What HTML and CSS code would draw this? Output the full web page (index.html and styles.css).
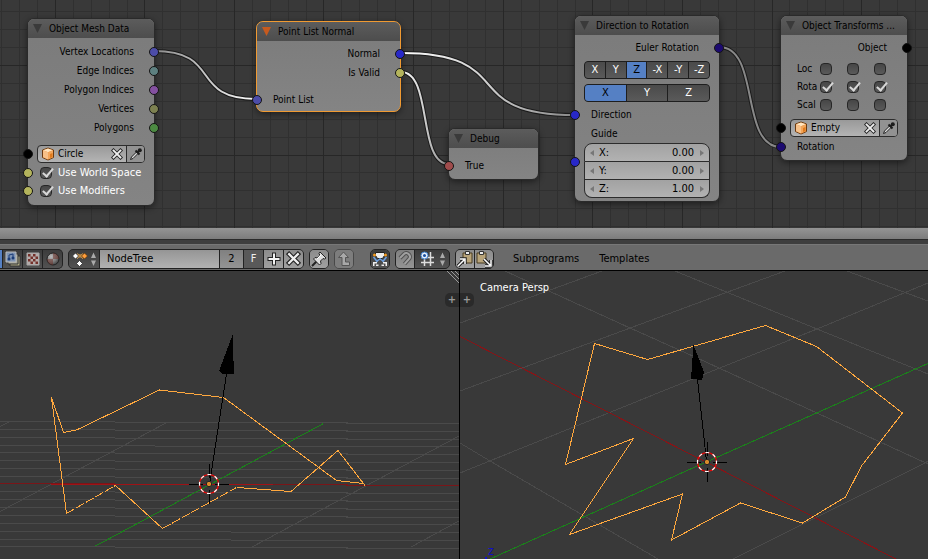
FILE: index.html
```html
<!DOCTYPE html>
<html lang="en">
<head>
<meta charset="utf-8">
<title>NodeTree</title>
<link rel="stylesheet" href="styles.css">
</head>
<body>
<svg class="defs" aria-hidden="true">
  <defs>
    <linearGradient id="w1" x1="0" x2="1"><stop offset="0" stop-color="#8c8c8c"/><stop offset=".5" stop-color="#c4c4c4"/><stop offset="1" stop-color="#fff"/></linearGradient>
    <linearGradient id="w2" x1="0" x2="1"><stop offset="0" stop-color="#fff"/><stop offset=".5" stop-color="#ccc"/><stop offset="1" stop-color="#888"/></linearGradient>
    <radialGradient id="ball" cx=".35" cy=".3" r=".8"><stop offset="0" stop-color="#bbb"/><stop offset=".6" stop-color="#777"/><stop offset="1" stop-color="#333"/></radialGradient>
    <symbol id="cube" viewBox="0 0 14 14">
      <path d="M7 1l5.5 2v7.500L7 13 1.500 10.500V3z" fill="#e8862a" stroke="#6b3a10"/>
      <path d="M7 1.500L12 3.300 7 5.300 2 3.300z" fill="#ffe6c2"/>
      <path d="M7 5.300l5-2v7L7 12.500z" fill="#f2a55a"/>
      <path d="M2 3.300l5 2v7.200l-5-2.200z" fill="#f7c088"/>
      <path d="M9 7l2.500-1v4L9 11z" fill="#e07a1c"/>
    </symbol>
    <symbol id="cross" viewBox="0 0 12 12">
      <path d="M2.500 2.500l7 7M9.500 2.500l-7 7" stroke="#222" stroke-width="3.600" stroke-linecap="square"/>
      <path d="M2.500 2.500l7 7M9.500 2.500l-7 7" stroke="#eee" stroke-width="1.800" stroke-linecap="square"/>
    </symbol>
    <symbol id="dropper" viewBox="0 0 14 14">
      <path d="M1.500 12.500l1-2.500 5-5 1.500 1.500-5 5z" fill="#ddd" stroke="#222"/>
      <path d="M6.500 3.500l4 4M8.500 5.500l2.500-2.500" stroke="#1c1c1c" stroke-width="2"/>
      <circle cx="10.800" cy="3.200" r="2" fill="#1c1c1c"/>
    </symbol>
    <symbol id="fold" viewBox="0 0 9 9"><path d="M0 0h9L4.500 9z" fill="currentColor"/></symbol>
    <symbol id="cursor" viewBox="-20 -20 40 40">
      <g fill="none" shape-rendering="crispEdges">
        <path d="M-20 0h14M6 0h14M0-20v14M0 6v14" stroke="#000"/>
      </g>
      <circle r="9.500" fill="none" stroke="#f00" stroke-width="1.200"/>
      <circle r="9.500" fill="none" stroke="#fff" stroke-width="1.200" stroke-dasharray="3.730" stroke-dashoffset="1.800"/>
      <circle r="2.700" fill="#d98b2b" stroke="#222"/>
    </symbol>
    <symbol id="clip" viewBox="0 0 18 18">
      <path d="M7 3h9v10H7z" fill="#b8a47a" stroke="#4a3c20"/>
      <path d="M9.500 1.500h4v3h-4z" fill="#eee" stroke="#333"/>
    </symbol>
  </defs>
</svg>

<main class="editor">
  <section class="canvas" aria-label="Node editor">
    <svg class="layer" width="928" height="228" aria-hidden="true">
      <g fill="none" shape-rendering="crispEdges">
        <path stroke="#303030" d="M1.500 0v228M19.500 0v228M37.500 0v228M73.500 0v228M91.500 0v228M109.500 0v228M127.500 0v228M162.500 0v228M180.500 0v228M198.500 0v228M216.500 0v228M252.500 0v228M270.500 0v228M288.500 0v228M306.500 0v228M341.500 0v228M359.500 0v228M377.500 0v228M395.500 0v228M431.500 0v228M449.500 0v228M467.500 0v228M485.500 0v228M521.500 0v228M539.500 0v228M557.500 0v228M575.500 0v228M610.500 0v228M628.500 0v228M646.500 0v228M664.500 0v228M700.500 0v228M718.500 0v228M736.500 0v228M754.500 0v228M789.500 0v228M807.500 0v228M825.500 0v228M843.500 0v228M879.500 0v228M897.500 0v228M915.500 0v228M0 11.500h928M0 29.500h928M0 47.500h928M0 83.500h928M0 101.500h928M0 119.500h928M0 137.500h928M0 172.500h928M0 190.500h928M0 208.500h928M0 226.500h928"/>
        <path stroke="#272727" d="M55.500 0v228M144.500 0v228M234.500 0v228M323.500 0v228M413.500 0v228M503.500 0v228M592.500 0v228M682.500 0v228M772.500 0v228M861.500 0v228M0 65.500h928M0 155.500h928"/>
      </g>
      <g fill="none">
        <g stroke="#1a1a1a" stroke-width="4">
          <path d="M154 51C223 51 188 99 257 99"/><path d="M401 53C520 53 456 115 575 115"/><path d="M401 72C433 72 417 164 449 164"/><path d="M719 47C761 47 739 147 781 147"/>
        </g>
        <g stroke-width="2">
          <path stroke="url(#w1)" d="M154 51C223 51 188 99 257 99"/><path stroke="url(#w2)" d="M401 53C520 53 456 115 575 115"/><path stroke="url(#w2)" d="M401 72C433 72 417 164 449 164"/><path stroke="#888" d="M719 47C761 47 739 147 781 147"/>
        </g>
      </g>
    </svg>

    <article class="node mesh">
      <h2><svg><use href="#fold"/></svg>Object Mesh Data</h2>
      <ul>
        <li class="out">Vertex Locations<i class="sock r vec2"></i></li>
        <li class="out">Edge Indices<i class="sock r teal"></i></li>
        <li class="out">Polygon Indices<i class="sock r violet"></i></li>
        <li class="out">Vertices<i class="sock r olive"></i></li>
        <li class="out">Polygons<i class="sock r green"></i></li>
      </ul>
      <div class="pick"><i class="sock l black"></i>
        <div class="field"><svg class="ic"><use href="#cube"/></svg><input type="text" aria-label="Object" value="Circle"><button class="clear" aria-label="Clear"><svg><use href="#cross"/></svg></button><button class="eye" aria-label="Pick object"><svg><use href="#dropper"/></svg></button></div>
      </div>
      <label class="opt"><i class="sock l yellow"></i><input type="checkbox" checked>Use World Space</label>
      <label class="opt"><i class="sock l yellow"></i><input type="checkbox" checked>Use Modifiers</label>
    </article>

    <article class="node normal active">
      <h2><svg><use href="#fold"/></svg>Point List Normal</h2>
      <ul>
        <li class="out">Normal<i class="sock r vec"></i></li>
        <li class="out">Is Valid<i class="sock r yellow"></i></li>
        <li class="in gap">Point List<i class="sock l vec2"></i></li>
      </ul>
    </article>

    <article class="node debug">
      <h2><svg><use href="#fold"/></svg>Debug</h2>
      <ul><li class="in">True<i class="sock l red"></i></li></ul>
    </article>

    <article class="node rot">
      <h2><svg><use href="#fold"/></svg>Direction to Rotation</h2>
      <ul><li class="out">Euler Rotation<i class="sock r navy"></i></li></ul>
      <div class="seg"><button>X</button><button>Y</button><button class="on">Z</button><button>-X</button><button>-Y</button><button>-Z</button></div>
      <div class="seg"><button class="on">X</button><button>Y</button><button>Z</button></div>
      <ul>
        <li class="in">Direction<i class="sock l vec"></i></li>
        <li class="in">Guide</li>
      </ul>
      <div class="nums"><i class="sock l vec"></i>
        <label>X:<input type="text" value="0.00"></label>
        <label>Y:<input type="text" value="0.00"></label>
        <label>Z:<input type="text" value="1.00"></label>
      </div>
    </article>

    <article class="node trans">
      <h2><svg><use href="#fold"/></svg>Object Transforms ...</h2>
      <ul><li class="out">Object<i class="sock r black"></i></li></ul>
      <div class="matrix">
        <span>Loc</span><input type="checkbox" aria-label="Location X"><input type="checkbox" aria-label="Location Y"><input type="checkbox" aria-label="Location Z">
        <span>Rota</span><input type="checkbox" checked aria-label="Rotation X"><input type="checkbox" checked aria-label="Rotation Y"><input type="checkbox" checked aria-label="Rotation Z">
        <span>Scal</span><input type="checkbox" aria-label="Scale X"><input type="checkbox" aria-label="Scale Y"><input type="checkbox" aria-label="Scale Z">
      </div>
      <div class="pick"><i class="sock l black"></i>
        <div class="field"><svg class="ic"><use href="#cube"/></svg><input type="text" aria-label="Object" value="Empty"><button class="clear" aria-label="Clear"><svg><use href="#cross"/></svg></button><button class="eye" aria-label="Pick object"><svg><use href="#dropper"/></svg></button></div>
      </div>
      <ul><li class="in">Rotation<i class="sock l navy"></i></li></ul>
    </article>
  </section>

  <div class="scroll"></div>
  <div class="edge"></div>

  <header class="bar">
    <div class="group types">
      <button class="blue" aria-label="Shader nodes"></button>
      <button class="dark" aria-label="Compositing nodes"><svg viewBox="0 0 18 18"><path d="M6 6h10v10H6z" fill="#b0ac88" stroke="#333"/><path d="M4 4h10v10H4z" fill="#a8a898" stroke="#333"/><path d="M2 2h10v10H2z" fill="#7f94b4" stroke="#bbb"/><path d="M5 9V5l4-1v4" fill="none" stroke="#1c3d78"/><circle cx="5" cy="9" r="1.500" fill="#1c3d78"/><circle cx="9" cy="8" r="1.500" fill="#1c3d78"/></svg></button>
      <button class="dark" aria-label="Texture nodes"><svg viewBox="0 0 18 18"><path d="M3 3h12v12H3z" fill="#b5acaa" stroke="#a8a8a8"/><path d="M4 4h2.500v2.500H4zM9 4h2.500v2.500H9zM6.500 6.500H9V9H6.500zM11.500 6.500H14V9h-2.500zM4 9h2.500v2.500H4zM9 9h2.500v2.500H9zM6.500 11.500H9V14H6.500zM11.500 11.500H14V14h-2.500z" fill="#74302a"/></svg></button>
      <button class="dark" aria-label="Material nodes"><svg viewBox="0 0 18 18"><circle cx="9" cy="9" r="6" fill="url(#ball)" stroke="#222"/><path d="M9 3a6 6 0 0 1 6 6H9zM9 9v6a6 6 0 0 1-6-6z" fill="#6e3028" opacity=".5"/></svg></button>
    </div>
    <div class="group tree">
      <button class="dark menu" aria-label="Browse node trees"><svg class="w30" viewBox="0 0 30 18"><path d="M6 6h9" stroke="#b98a4a" stroke-width="3"/><path d="M8 9l3-3 3 3M8 3.500l3 2 3-2" fill="none" stroke="#b98a4a"/><path d="M6.500 3l3 3-3 3-3-3zM10.500 10.500l3 3-3 3-3-3z" fill="#fff" stroke="#222" stroke-width=".7"/><path d="M15.500 3l3 3-3 3-3-3z" fill="#ff9d3c" stroke="#5a3000" stroke-width=".7"/><path d="M22 8l2.500-5.500L27 8zM22 10.500h5L24.500 16z" fill="#aaa"/></svg></button>
      <input type="text" aria-label="Node tree name" value="NodeTree">
      <button class="mid count">2</button>
      <button class="fake">F</button>
      <button class="light" aria-label="Add"><svg viewBox="0 0 18 18"><path d="M9 4.500v9M4.500 9h9" stroke="#222" stroke-width="4" stroke-linecap="square"/><path d="M9 4.500v9M4.500 9h9" stroke="#f2f2f2" stroke-width="2" stroke-linecap="square"/></svg></button>
      <button class="light unlink" aria-label="Unlink"><svg><use href="#cross"/></svg></button>
    </div>
    <div class="group"><button class="light" aria-label="Pin"><svg viewBox="0 0 18 18"><path d="M2 16l5-5" stroke="#222" stroke-width="2"/><path d="M10 2l6 6-1.500 1-1.500-.5-2.500 2.500.5 2.500-1.500 1.500-6-6 1.500-1.500 2.500.5L10 5.500 9 3.500z" fill="#ddd" stroke="#222"/><path d="M7 9l4-4" stroke="#fff"/></svg></button></div>
    <div class="group off"><button class="light" aria-label="Parent tree"><svg viewBox="0 0 18 18"><path d="M8.500 2l5 5.500h-3V12h4v3.500H7V7.500H3.500z" fill="#a8a8a8" stroke="#555"/></svg></button></div>
    <div class="group wide"><button class="dark" aria-label="Show in 3D view"><svg viewBox="0 0 18 18"><path d="M4.500 2.500h9v3l-2 3h-5l-2-3z" fill="#eee" stroke="#222"/><circle cx="3.500" cy="5" r="1.500" fill="#f39a1e"/><circle cx="14.500" cy="5" r="1.500" fill="#f39a1e"/><path d="M2.500 7l4 5M15.500 7l-4 5M6 11l3-2 3 2" fill="none" stroke="#6da0e0" stroke-width="1.500"/><path d="M2 12h4v1.500H3.500V16H2zM16 12h-4v1.500h2.500V16H16zM5 14.500h2.500V16H5zM10.500 14.500H13V16h-2.500z" fill="#eee"/></svg></button></div>
    <div class="group">
      <button class="mid" aria-label="Snap"><svg viewBox="0 0 18 18"><path d="M4 8l4-4c3-3 8 2 5 5l-4.500 5" fill="none" stroke="#505050" stroke-width="4"/><path d="M4 8l4-4c3-3 8 2 5 5l-4.500 5" fill="none" stroke="#a0a0a0" stroke-width="2"/></svg></button>
      <button class="dark snap" aria-label="Snap element"><svg class="w34" viewBox="0 0 34 18"><path d="M9.500 3v13M15.500 2v14M6 7.500h13M6 12.500h13" stroke="#ddd" stroke-width="1.500"/><circle cx="9.500" cy="5.500" r="3.500" fill="#e8f0fa" stroke="#3e7fd0"/><circle cx="9.500" cy="5.500" r="1.500" fill="#1b4fa0"/><path d="M25 8l2.500-5.500L30 8zM25 10.500h5L27.500 16z" fill="#aaa"/></svg></button>
    </div>
    <div class="group">
      <button class="light" aria-label="Copy nodes"><svg viewBox="0 0 18 18"><use href="#clip"/><path d="M2 16l6-6M4 9h5v5" fill="none" stroke="#222" stroke-width="3.500"/><path d="M2 16l6-6M4 9h5v5" fill="none" stroke="#fff" stroke-width="1.500"/></svg></button>
      <button class="light" aria-label="Paste nodes"><svg viewBox="0 0 18 18"><use href="#clip" x="-5"/><path d="M9 9l6 6M16 10v6h-6" fill="none" stroke="#222" stroke-width="3.500"/><path d="M9 9l6 6M16 10v6h-6" fill="none" stroke="#fff" stroke-width="1.500"/></svg></button>
    </div>
    <nav><a href="#subprograms">Subprograms</a><a href="#templates">Templates</a></nav>
  </header>

  <section class="views">
    <div class="view" aria-label="User view">
      <svg class="scene" viewBox="0 271 459 288" preserveAspectRatio="xMinYMin slice" aria-hidden="true">
        <g fill="none" shape-rendering="crispEdges">
          <path stroke="#4a4a4a" d="M0 421.500l459 2M0 429.500l459 2M0 437.500l459 2M0 445.500l459 1.500M0 452.500l459 2M0 460.500l459 2M0 468.500l459 2M0 476.500l459 2M0 491.500l459 2M0 499.500l459 2M0 507.500l459 2M0 515.500l459 2M0 523.500l459 1.500M0 531l459 2M0 539l459 2M0 546.500l459 2M0 426.500l9-4.500M0 511.500l166-88.500M252 547l207-111M411 547l48-26"/>
          <path stroke="#7a1518" d="M0 483.500L459 485.500"/>
          <path stroke="#a01216" d="M51 484.500h222"/>
          <path stroke="#1a821a" d="M95.500 546L323.500 423.500"/>
          <path stroke="#ffa83e" d="M66.500 513.500L51.500 397.500l12 35 13-2.500 83-40 64 7.500 113 83 27 3 1.500 2-27-35-47 41-54-4M115.500 485.500l47 43"/>
          <path stroke="#ffa83e" stroke-dasharray="9 2" d="M66.500 513.500l49-28M162.500 528.500l74-41"/>
          <path stroke="#000" d="M209.500 484L226.500 374"/>
          <path fill="#000" d="M232.500 335L234 374h-12l-3-3z"/>
        </g>
        <use href="#cursor" x="189" y="464" width="40" height="40"/>
        <path d="M447 271l12 12M451 271l8 8M455 271l4 4" stroke="#999" shape-rendering="crispEdges"/>
      </svg>
      <button class="tab right" aria-label="Open properties">+</button>
    </div>
    <div class="view" aria-label="Camera view">
      <svg class="scene" viewBox="460 271 468 288" preserveAspectRatio="xMinYMin slice" aria-hidden="true">
        <g fill="none" shape-rendering="crispEdges">
          <path stroke="#4a4a4a" d="M460 323L602 271M460 391L695 304 785 271M460 473L695 378 817 329 928 283M733 559L925 463l3-2M505 271L630 328 695 357 928 464M675 271L817 329 928 374M847 271L928 301M460 443L490 461 658 559"/>
          <path stroke="#861417" d="M460 336.500L695 456.500 897 559.500"/>
          <path stroke="#1a821a" d="M490 559L695 467 928 363.500"/>
          <path stroke="#ffa83e" d="M594.500 343.500l53 16 118-34 51 21 86 66.500-41 53-16 31-43 26-62-20-69 37 11-46-113 40.500 64-96-68 26z"/>
          <path stroke="#000" d="M706.500 461L697.500 379"/>
          <path fill="#000" d="M693.500 345l10.500 27-2 8-11-1z"/>
        </g>
        <use href="#cursor" x="687" y="442" width="40" height="40"/>
        <path d="M485 557h2v2h-2z" fill="#1010d0"/>
        <text x="488" y="555" class="axis">z</text>
      </svg>
      <button class="tab left" aria-label="Open tools">+</button>
      <p class="name">Camera Persp</p>
    </div>
  </section>
</main>
</body>
</html>
```
FILE: styles.css
```css
* { box-sizing: border-box; }
body {
  margin: 0;
  background: #393939;
  color: #000;
  font: 11px/18px "DejaVu Sans Condensed", "DejaVu Sans", sans-serif;
}
button, input {
  margin: 0;
  padding: 0;
  border: 0;
  background: none;
  color: inherit;
  font: inherit;
  min-width: 0;
}
ul, h2, p { margin: 0; padding: 0; list-style: none; font: inherit; }
.defs { position: absolute; width: 0; height: 0; }
.editor { display: flex; flex-direction: column; min-height: 100vh; }

/* Node canvas */
.canvas { position: relative; flex: none; min-height: 228px; overflow: hidden; }
.layer { position: absolute; left: 0; top: 0; }
.node {
  position: absolute;
  border: 1px solid #2a2a2a;
  border-radius: 7px;
  background: linear-gradient(#7b7b7b, #848484);
  box-shadow: 0 2px 6px rgba(0, 0, 0, .45);
  font-size: 10px;
}
.mesh { left: 27px; top: 18px; width: 128px; padding-bottom: 5px; }
.normal { left: 256px; top: 21px; width: 145px; padding-bottom: 2px; }
.debug { left: 448px; top: 128px; width: 91px; padding-bottom: 4px; }
.rot { left: 574px; top: 15px; width: 146px; padding-bottom: 3px; }
.trans { left: 780px; top: 15px; width: 128px; padding-bottom: 4px; }
.node h2 {
  display: flex;
  align-items: center;
  gap: 7px;
  height: 19px;
  padding-left: 5px;
  border-radius: 6px 6px 0 0;
  background: linear-gradient(#5c5c5c, #4d4d4d);
  white-space: nowrap;
}
.node h2 svg { flex: none; width: 9px; height: 9px; color: #3a3a3a; }
.node.active { border-color: #f09a32; }
.node.active h2 svg { color: #c75a1e; }
.node ul { padding-top: 3px; }
.node li { position: relative; height: 19px; line-height: 19px; }
.out { padding-right: 20px; text-align: right; }
.in { padding-left: 16px; }
.in.gap { margin-top: 8px; }
.node.mesh ul { padding-top: 4px; }
.node.debug ul { padding-top: 8px; }
.rot ul + .seg { margin-top: 4px; }
.node.rot .seg + ul { margin-top: -2px; padding-top: 0; }
.node.trans .pick + ul { padding-top: 0; }

.sock {
  position: absolute;
  top: 50%;
  width: 10px;
  height: 10px;
  margin-top: -5px;
  border: 1px solid #141414;
  border-radius: 50%;
}
.sock.r { right: -5px; }
.sock.l { left: -5px; }
.vec { background: #2828c8; }
.vec2 { background: #4c4ca8; }
.teal { background: #5d8080; }
.violet { background: #8450a0; }
.olive { background: #7c8050; }
.green { background: #4c8a42; }
.yellow { background: #b4b45c; }
.red { background: #a04c4c; }
.navy { background: #1c0a70; }
.black { background: #000; }

.pick { position: relative; padding: 0 9px; }
.mesh .pick { margin-top: 8px; }
.field {
  display: flex;
  align-items: center;
  height: 18px;
  border: 1px solid #2c2c2c;
  border-radius: 4px;
  background: linear-gradient(#999, #b4b4b4);
}
.field .ic { flex: none; width: 14px; height: 14px; margin: 0 3px; }
.field input { flex: 1; width: 0; height: 16px; }
.clear, .eye { display: flex; align-items: center; justify-content: center; width: 18px; height: 16px; }
.clear svg { width: 12px; height: 12px; }
.eye { border-left: 1px solid #2c2c2c; border-radius: 0 3px 3px 0; background: #929292; }
.eye svg { width: 14px; height: 14px; }

.opt { position: relative; display: flex; align-items: center; gap: 6px; height: 18px; padding-left: 12px; color: #fff; font-size: 11px; }
.pick + .opt { margin-top: 1px; }
input[type="checkbox"] {
  position: relative;
  flex: none;
  appearance: none;
  width: 12px;
  height: 12px;
  border: 1px solid #262626;
  border-radius: 4px;
  background: linear-gradient(#464646, #5a5a5a);
}
input[type="checkbox"]:checked::after {
  content: "";
  position: absolute;
  left: 4px;
  top: -2px;
  width: 4px;
  height: 9px;
  border: solid #d8d8d8;
  border-width: 0 2px 2px 0;
  transform: rotate(40deg);
}
.matrix {
  display: grid;
  grid-template-columns: 23px 27px 27px 12px;
  grid-auto-rows: 18px;
  align-items: center;
  margin: 3px 0 5px;
  padding-left: 16px;
}

.seg { display: flex; height: 18px; margin: 0 9px 5px; border: 1px solid #1e1e1e; border-radius: 4px; overflow: hidden; background: #1e1e1e; gap: 1px; }
.seg button { flex: 1; line-height: 16px; background: linear-gradient(#4a4a4a, #5a5a5a); color: #fff; font-size: 11px; }
.seg .on { background: #5580c4; color: #000; }

.nums { position: relative; display: grid; margin: 0 9px; font-size: 11px; }
.nums .sock { left: -14px; margin-top: -14px; }
.nums label {
  position: relative;
  display: flex;
  height: 18px;
  padding: 0 15px 0 14px;
  border: 1px solid #2c2c2c;
  border-top-width: 0;
  line-height: 17px;
  background: linear-gradient(#a2a2a2, #b2b2b2);
}
.nums label:first-of-type { height: 19px; border-top-width: 1px; border-radius: 8px 8px 0 0; }
.nums label:last-of-type { border-radius: 0 0 8px 8px; }
.nums input { flex: 1; width: 0; text-align: right; }
.nums label::before, .nums label::after { content: ""; position: absolute; top: 6px; border: 3px solid transparent; }
.nums label::before { left: 2px; border-right: 4px solid #777; }
.nums label::after { right: 2px; border-left: 4px solid #777; }

/* Scroll strip and header */
.scroll { flex: none; height: 11px; background: linear-gradient(#949494, #7c7c7c); }
.edge { flex: none; height: 5px; border-top: 1px solid #2a2a2a; background: #3e3e3e; }
.bar {
  display: flex;
  flex: none;
  align-items: center;
  gap: 5px;
  height: 27px;
  padding-top: 2px;
  border-top: 1px solid #777;
  border-bottom: 1px solid #000;
  background: #6a6a6a;
  overflow: hidden;
}
.group { display: flex; flex: none; gap: 1px; height: 20px; border: 1px solid #222; border-radius: 5px; background: #222; overflow: hidden; }
.group button { display: flex; align-items: center; justify-content: center; width: 18px; height: 18px; flex: none; }
.types button, .tree button { width: 19px; }
.group svg { flex: none; width: 18px; height: 18px; }
.group svg.w30 { width: 30px; }
.group svg.w34 { width: 34px; }
.types { border-left: 0; border-radius: 0 5px 5px 0; }
.group .blue { width: 2px; background: #5580c4; }
.dark { background: linear-gradient(#3c3c3c, #525252); }
.light { background: linear-gradient(#8c8c8c, #a0a0a0); }
.mid { background: linear-gradient(#808080, #949494); }
.fake { background: #595959; color: #eee; }
.group .menu { width: 30px; }
.group.types .dark, .group .fake, .group.tree .light { width: 19px; }
.tree input { width: 119px; padding-left: 7px; background: linear-gradient(#959595, #b2b2b2); }
.group .count { width: 23px; }
.group .snap { width: 34px; }
.unlink svg { width: 15px; height: 15px; }
.off { border-color: #484848; }
.off .light { background: #7d7d7d; }
.wide { margin-left: 11px; }
.bar nav { display: flex; gap: 20px; padding-left: 14px; }
.bar a { color: #000; text-decoration: none; }

/* 3D views */
.views { display: grid; flex: 1; grid-template-columns: 459fr 468fr; gap: 1px; min-height: 288px; background: #000; }
.view { position: relative; overflow: hidden; background: #393939; }
.scene { position: absolute; width: 100%; height: 100%; }
.name { position: relative; padding: 8px 20px; color: #fff; }
.tab { position: absolute; top: 22px; width: 14px; height: 14px; background: #2a2a2a; color: #999; font-weight: bold; line-height: 14px; }
.tab.right { right: 0; border-radius: 5px 0 0 5px; }
.tab.left { left: 0; border-radius: 0 5px 5px 0; }
.axis { fill: #1010c8; font-size: 12px; }
```
